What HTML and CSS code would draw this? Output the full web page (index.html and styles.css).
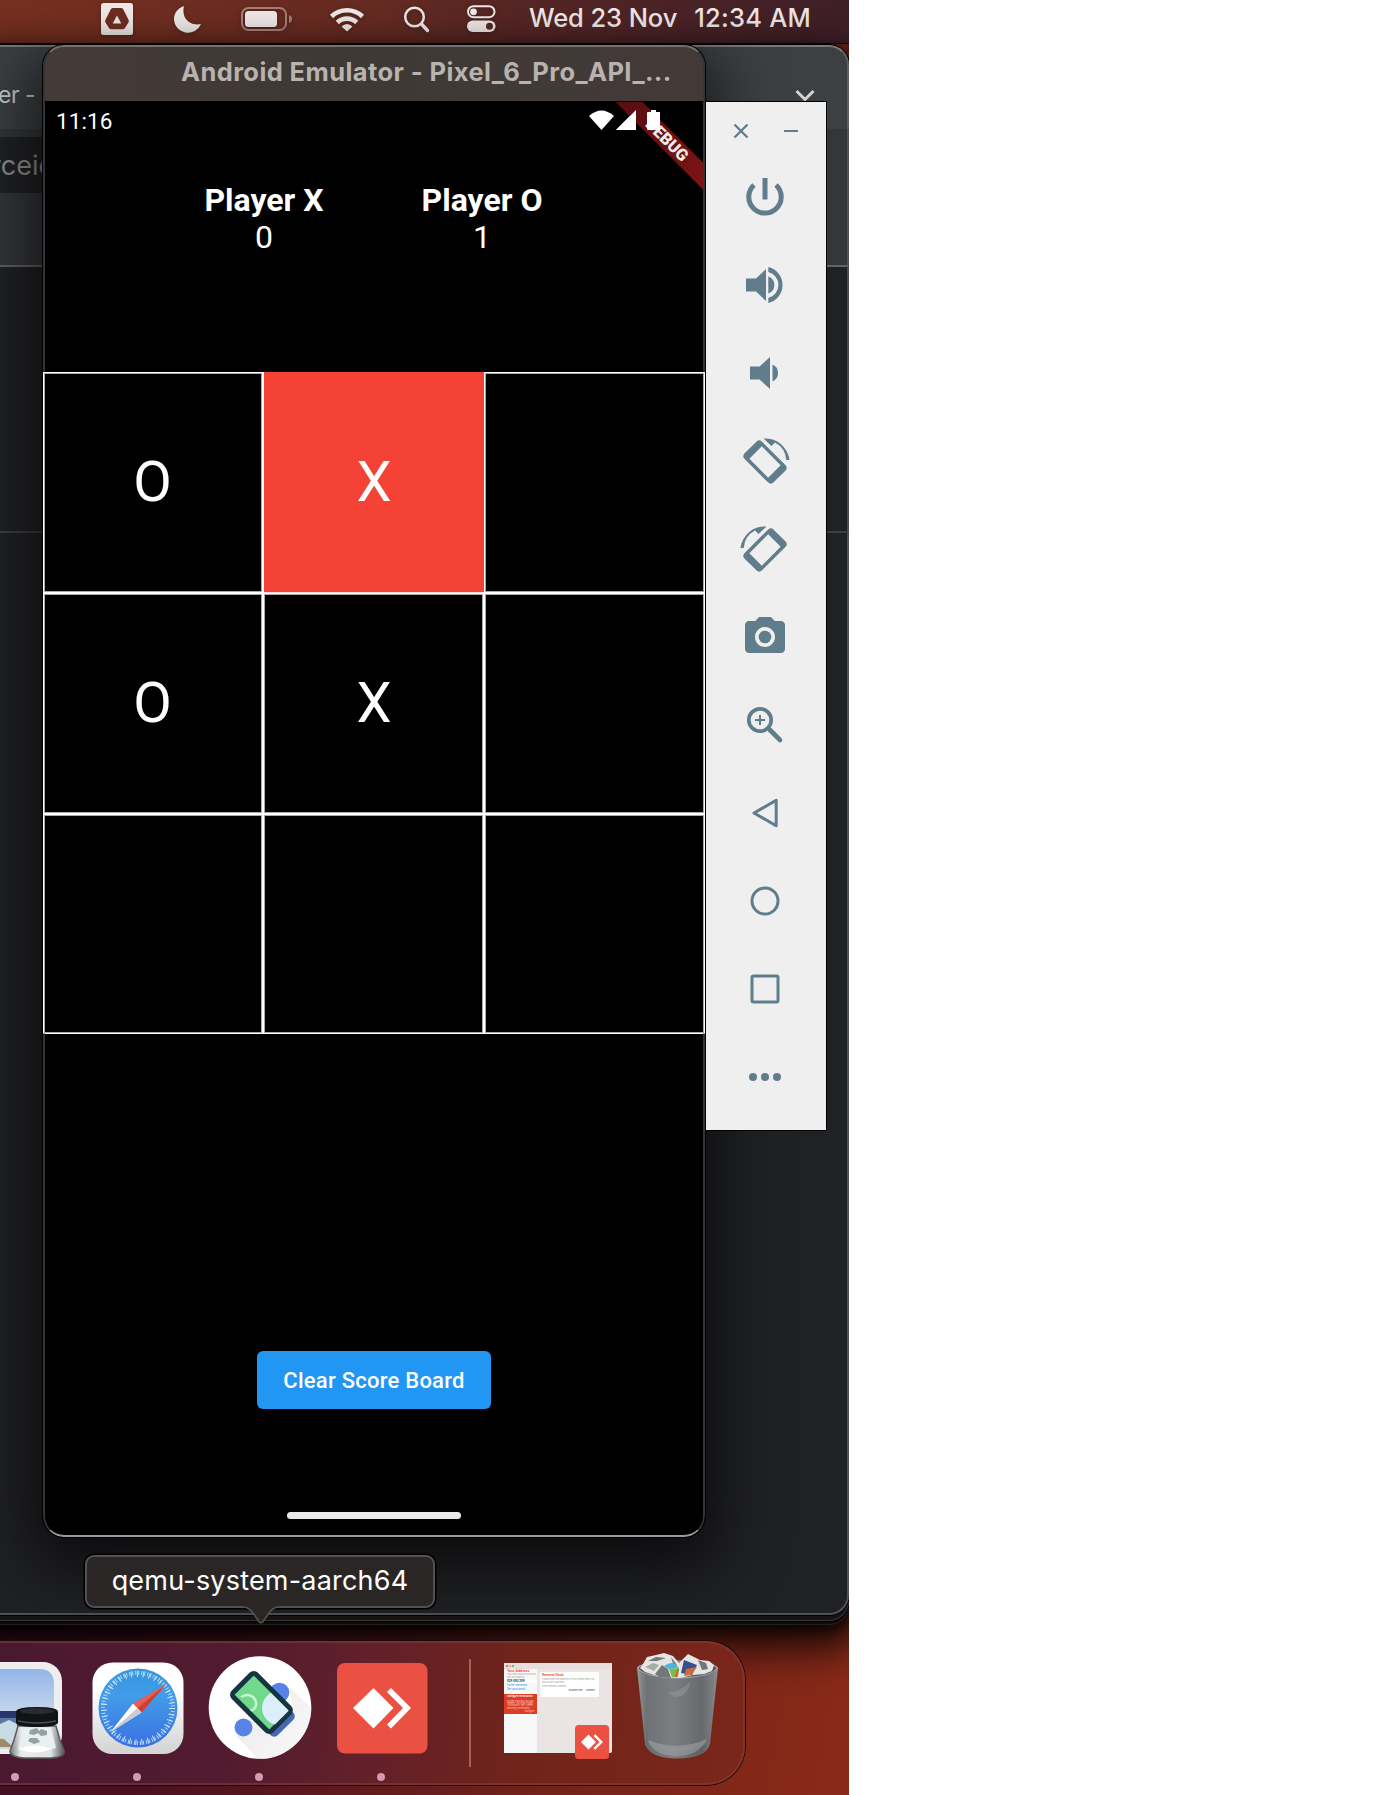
FILE: index.html
```html
<!DOCTYPE html>
<html lang="en">
<head>
<meta charset="utf-8">
<title>Tic Tac Toe in the emulator</title>
<link rel="stylesheet" href="styles.css">
</head>
<body>
<div class="desktop">
  <header class="menubar">
    <svg class="menubar-icons" viewBox="90 0 420 43" width="420" height="43">
      <rect x="101" y="3" width="32" height="32" rx="2.500" fill="#efe8e7"/>
      <path d="M113 8h8q1.500 0 2.200 1.200l5.300 10.500q.8 1.600 0 2.800l-3.500 5.500q-.8 1.200-2.500 1.200h-11q-1.700 0-2.500-1.200l-3.500-5.500q-.8-1.200 0-2.800l5.300-10.500q.7-1.200 2.200-1.200z" fill="#6e2d22"/>
      <path d="M117 15.500l4.300 8h-8.600z" fill="#efe8e7"/>
      <path d="M184 6c-6 2-10 7-10 13a14 14 0 0 0 27 5c-11 2.500-20-6-17-18z" fill="#efe8e7"/>
      <rect x="242" y="8" width="44" height="22" rx="6.500" fill="none" stroke="#a77f7a" stroke-width="2"/>
      <rect x="245" y="11" width="32" height="16" rx="3.500" fill="#efe8e7"/>
      <path d="M289 15q3 1 3 4t-3 4z" fill="#a77f7a"/>
      <g fill="none" stroke="#efe8e7" stroke-width="4.600">
        <path d="M331.500 16.500a22.500 22.500 0 0 1 31 0"/>
        <path d="M337.300 22.500a14 14 0 0 1 19.400 0"/>
      </g>
      <path d="M341.500 26.500q5.500-5 11 0l-5.500 5z" fill="#efe8e7"/>
      <circle cx="414.500" cy="17" r="9.300" fill="none" stroke="#efe8e7" stroke-width="2.500"/>
      <path d="M421.500 24l6 6.500" stroke="#efe8e7" stroke-width="3.400" stroke-linecap="round"/>
      <rect x="468" y="6.200" width="26.500" height="11" rx="5.500" fill="none" stroke="#efe8e7" stroke-width="2"/>
      <circle cx="473.500" cy="11.800" r="3.400" fill="#efe8e7"/>
      <rect x="467" y="20.500" width="28.500" height="11.500" rx="5.700" fill="#efe8e7"/>
      <circle cx="489.500" cy="26.200" r="3.500" fill="#5a2826"/>
    </svg>
    <span class="menubar-date">Wed 23 Nov</span>
    <span class="menubar-time">12:34 AM</span>
  </header>

  <section class="window browser browser-back"></section>
  <section class="window browser browser-middle"></section>
  <section class="window browser">
    <div class="tabstrip">
      <span class="tab-title">er -</span>
      <svg class="chevron" width="20" height="14" viewBox="0 0 20 14"><path d="M1.500 2l8.500 8.500 8.500-8.500" fill="none" stroke="#d3d4d5" stroke-width="3"/></svg>
    </div>
    <div class="addressbar"><span class="omnibox">rceic</span></div>
    <div class="page-header"></div>
  </section>

  <section class="window emulator">
    <div class="titlebar">Android Emulator - Pixel_6_Pro_API_...</div>
    <div class="screen">
      <div class="statusbar">
        <span class="clock">11:16</span>
        <svg class="status-icons" width="74" height="22" viewBox="588 109 74 22" fill="#fff">
          <path d="M589 116q12.500-11 25 0l-12.500 14z"/>
          <path d="M636 110v20h-20z"/>
          <path d="M651 110h5v2h3q1 0 1 1v16q0 1-1 1h-11q-1 0-1-1v-16q0-1 1-1h3z"/>
        </svg>
      </div>
      <svg class="debug-ribbon" width="92" height="92" viewBox="614 102 92 92">
        <defs><linearGradient id="ribbon" x1="0" y1="0" x2="1" y2="1"><stop offset="0" stop-color="#570e10"/><stop offset="1" stop-color="#7d1417"/></linearGradient></defs>
        <path d="M615.500 102h27l63 63v27z" fill="url(#ribbon)"/>
        <text class="ribbon-text" transform="translate(667 140) rotate(45)" text-anchor="middle" y="5.500">DEBUG</text>
        <path d="M651 110h5v2h3q1 0 1 1v16q0 1-1 1h-11q-1 0-1-1v-16q0-1 1-1h3z M636 110v20h-20z" fill="#fff"/>
      </svg>
      <div class="scores">
        <div class="score"><b>Player X</b><span>0</span></div>
        <div class="score"><b>Player O</b><span>1</span></div>
      </div>
      <div class="board">
        <div class="cell">O</div><div class="cell cell-active">X</div><div class="cell"></div>
        <div class="cell">O</div><div class="cell">X</div><div class="cell"></div>
        <div class="cell"></div><div class="cell"></div><div class="cell"></div>
      </div>
      <button class="clear-button">Clear Score Board</button>
      <div class="home-indicator"></div>
    </div>
  </section>

  <aside class="toolbar">
    <div class="toolbar-window">
      <svg width="18" height="18" viewBox="-9 -9 18 18"><path d="M-6.500-6.500L6.500 6.500M6.500-6.500L-6.500 6.500" stroke="#607d8b" stroke-width="2.300"/></svg>
      <svg width="18" height="18" viewBox="-9 -9 18 18"><path d="M-7 0H7" stroke="#607d8b" stroke-width="2"/></svg>
    </div>
    <svg class="tool" viewBox="-25 -25 50 50"><path d="M-11-12A16.200 16.200 0 1 0 11-12" fill="none" stroke="#607d8b" stroke-width="5"/><path d="M-2.500-19h5V2.500h-5z"/></svg>
    <svg class="tool" viewBox="-25 -25 50 50"><path d="M-19-6.500h10L1-16V16L-9 6.500h-10zM3.300-8.500a9 9 0 0 1 0 17zM3.300-18a18.500 18.500 0 0 1 0 36v-5a13.400 13.400 0 0 0 0-26z"/></svg>
    <svg class="tool" viewBox="-25 -25 50 50"><path d="M-15-6.500h9.500L5-16V16L-5.500 6.500H-15zM7.500-8.500a9.300 9.300 0 0 1 0 17z"/></svg>
    <svg class="tool" viewBox="-25 -25 50 50"><g id="rotate"><path transform="translate(0 1) rotate(45)" fill-rule="evenodd" d="M-16.500-12.300h33q4 0 4 4v16.600q0 4-4 4h-33q-4 0-4-4v-16.600q0-4 4-4zM-13.300-8.800v17.600h26.600v-17.600z"/><path d="M-1.500-22.500A24.500 24.500 0 0 1 24.500-1h-3.200A21.500 21.500 0 0 0 10-18.500L6.500-15z"/></g></svg>
    <svg class="tool" viewBox="-25 -25 50 50"><use href="#rotate" transform="scale(-1 1)"/></svg>
    <svg class="tool" viewBox="-25 -25 50 50"><path transform="translate(-24 -24) scale(2)" d="M9 2L7.170 4H4c-1.100 0-2 .9-2 2v12c0 1.100.9 2 2 2h16c1.100 0 2-.9 2-2V6c0-1.100-.9-2-2-2h-3.170L15 2H9zm3 15c-2.760 0-5-2.240-5-5s2.240-5 5-5 5 2.240 5 5-2.240 5-5 5z"/><circle r="6.300"/></svg>
    <svg class="tool" viewBox="-25 -25 50 50"><g fill="none" stroke="#607d8b"><circle cx="-5" cy="-5" r="11.200" stroke-width="3.700"/><path d="M-10-5H0M-5-10V0" stroke-width="2"/><path d="M4.500 4.500L15 15" stroke-width="4.600" stroke-linecap="round"/></g></svg>
    <svg class="tool" viewBox="-25 -25 50 50"><path d="M11.200-12.700V12.700L-11 0Z" fill="none" stroke="#607d8b" stroke-width="3" stroke-linejoin="round"/></svg>
    <svg class="tool" viewBox="-25 -25 50 50"><circle r="13" fill="none" stroke="#607d8b" stroke-width="3"/></svg>
    <svg class="tool" viewBox="-25 -25 50 50"><rect x="-13" y="-13" width="26" height="26" rx="1.500" fill="none" stroke="#607d8b" stroke-width="3"/></svg>
    <svg class="tool" viewBox="-25 -25 50 50"><circle cx="-12" r="4"/><circle r="4"/><circle cx="12" r="4"/></svg>
  </aside>

  <nav class="dock">
    <svg class="dock-item" viewBox="-46 1641 122 143" width="122" height="143">
      <defs>
        <linearGradient id="sky" x1="0" y1="0" x2="0" y2="1"><stop offset="0" stop-color="#94b5ea"/><stop offset="1" stop-color="#c3d5ec"/></linearGradient>
        <linearGradient id="glass" x1="0" y1="0" x2="1" y2="0"><stop offset="0" stop-color="#777b7c"/><stop offset=".2" stop-color="#e8ebea"/><stop offset=".75" stop-color="#dfe5e5"/><stop offset="1" stop-color="#555"/></linearGradient>
      </defs>
      <rect x="-29" y="1662" width="91" height="92" rx="19" fill="#eeeeef"/>
      <path d="M-22 1669h61q15 0 15 15v28h-76z" fill="url(#sky)"/>
      <path d="M-22 1711h76v36h-76z" fill="#29356b"/>
      <path d="M-22 1718h44v6h-44z" fill="#5876a0"/>
      <path d="M-22 1724l12-3 10 3 9-4 8 4v25h-39z" fill="#c9dce3"/>
      <path d="M-22 1738l26 1 9 8h-35z" fill="#a08a69"/>
      <path d="M18 1726h38l4 14 4 11q1 6-13 7H24q-14-1-14-7l4-11z" fill="url(#glass)" stroke="#5b5e5e" stroke-width="1.500"/>
      <path d="M24 1728h27l5 20q-19 6-38 0z" fill="#e9f0ef"/>
      <path d="M30 1730l7-2 3 4-6 3-5-1zM41 1729l6 2v4l-6 1-3-3zM30 1738l7 0 3 4-6 2-6-3z" fill="#96a1a3"/>
      <path d="M18 1749q17-7 34 0-17 7-34 0" fill="#fff"/>
      <path d="M16 1712q0-5 21-5t21 5v11q-3 4-21 4t-21-4z" fill="#111314"/><ellipse cx="37" cy="1711" rx="17" ry="3" fill="#292c2e"/>
      <path d="M18 1721q19 4 38 0" stroke="#4b4e50" fill="none" stroke-width="1.500"/>
      <circle class="running" cx="15" cy="1777" r="4"/>
    </svg>
    <svg class="dock-item" viewBox="76 1641 122 143" width="122" height="143">
      <defs>
        <linearGradient id="safari-tile" x1="0" y1="0" x2="0" y2="1"><stop offset=".3" stop-color="#fff"/><stop offset="1" stop-color="#d3d3d4"/></linearGradient>
        <linearGradient id="safari-dial" x1="0" y1="0" x2="0" y2="1"><stop offset="0" stop-color="#3596dc"/><stop offset=".35" stop-color="#429ce9"/><stop offset="1" stop-color="#3a70e0"/></linearGradient>
      </defs>
      <rect x="92.500" y="1662.500" width="91" height="91.500" rx="20" fill="url(#safari-tile)"/>
      <circle cx="138" cy="1708" r="39.500" fill="url(#safari-dial)"/>
      <circle cx="138" cy="1708" r="35" fill="none" stroke="#b7daf7" stroke-width="4" stroke-dasharray="1 2.054"/>
      <circle cx="138" cy="1708" r="34" fill="none" stroke="#c9e3f9" stroke-width="6" stroke-dasharray="1 5.109"/>
      <path d="M166 1684.500l-24.500 28-8.500-9z" fill="#eb5d50"/><path d="M166 1684.500l-24.500 28-4-4.500z" fill="#c94238"/>
      <path d="M110.500 1732l22.500-28.500 8.500 9z" fill="#fff"/><path d="M110.500 1732l27-24 4 4.500z" fill="#c8ccd0"/>
      <circle class="running" cx="137" cy="1777" r="4"/>
    </svg>
    <svg class="dock-item" viewBox="198 1641 122 143" width="122" height="143">
      <defs>
        <clipPath id="disc"><circle cx="260" cy="1707.500" r="51.300"/></clipPath>
        <clipPath id="phone"><rect x="-25" y="-13.500" width="50" height="27" transform="translate(261.500 1702.500) rotate(45)"/></clipPath>
        <linearGradient id="cast" x1="0" y1="0" x2="1" y2="1"><stop offset="0" stop-color="#d6d6d8"/><stop offset="1" stop-color="#fff"/></linearGradient>
      </defs>
      <circle cx="260" cy="1707.500" r="51.300" fill="#fff"/>
      <g clip-path="url(#disc)"><path d="M289 1687l40 38v60h-46l-46-48 12-18 25 12 20-20z" fill="url(#cast)" opacity=".55"/></g>
      <circle cx="279.500" cy="1692.500" r="9.800" fill="#5583e6"/>
      <circle cx="243.500" cy="1727.500" r="9" fill="#5583e6"/>
      <rect x="-29" y="-16" width="58" height="32" rx="5" transform="translate(265 1707) rotate(45)" fill="#4467b8"/>
      <rect x="-27" y="-16" width="54" height="32" rx="3.500" transform="translate(261.500 1702.500) rotate(45)" fill="#71d98b" stroke="#173443" stroke-width="5"/>
      <g clip-path="url(#phone)"><circle cx="279" cy="1708" r="17" fill="#dcedfc"/><path d="M241 1697q7-4 12 0 6 6 1 12l-6 3" fill="none" stroke="#c9f4d1" stroke-width="2.500"/></g>
      <circle class="running" cx="259" cy="1777" r="4"/>
    </svg>
    <svg class="dock-item" viewBox="320 1641 122 143" width="122" height="143">
      <rect x="337" y="1663" width="90.500" height="90.500" rx="8" fill="#ea5142"/>
      <path d="M373.500 1688l20 20-20 20.500-20.500-20.500zM387 1692l4-4 20 20-20 20.500-4-4 16-16.500z" fill="#fff"/>
      <circle class="running" cx="381" cy="1777" r="4"/>
    </svg>
    <span class="dock-divider"></span>
    <div class="mini">
      <div class="mini-bar"><i></i><i></i><i></i></div>
      <div class="mini-body">
        <div class="mini-side">
          <b>Your Address</b><span>Your desk can be accessed with this address.</span><strong>828 493 289</strong>
          <em>Invite someone...</em><em>Set password...</em>
          <div class="mini-alert"><b>Configure Permissions</b><span>In order to access your Mac remotely, you need to grant "Accessibility" and "Screen Recording" permissions.</span><u>Configure</u></div>
        </div>
        <div class="mini-card"><b>Remote Desk</b><span>Please enter the address of the remote desk you would like to access.</span><span class="mini-input">Enter Remote Address</span><u>Browse Files &nbsp; &nbsp; Connect</u></div>
      </div>
      <svg class="mini-badge" viewBox="0 0 34 34" width="34" height="34"><rect width="34" height="34" rx="3.500" fill="#ea5142"/><path d="M13.500 9.500l7.500 7.500-7.500 7.500L6 17zM18.500 11l1.700-1.700L28 17l-7.800 7.700-1.700-1.700 6-6z" fill="#fff"/></svg>
    </div>
    <svg class="trash" viewBox="634 1641 88 143" width="88" height="143">
      <defs>
        <linearGradient id="bin" x1="0" y1="0" x2="1" y2="0"><stop offset="0" stop-color="#9a9d9e"/><stop offset=".12" stop-color="#696d6f"/><stop offset=".45" stop-color="#7b7f81"/><stop offset=".8" stop-color="#5c6062"/><stop offset="1" stop-color="#8b8f91"/></linearGradient>
      </defs>
      <path d="M637 1668q3-6 40-7 37 1 41 7l-8 76q-3 14-33 14.500-28-.5-32-14.500z" fill="url(#bin)"/>
      <path d="M637.500 1668q6-7 40-7 34 0 40 7-6 9-40 10-34-1-40-10z" fill="#54585b" stroke="#a9acad" stroke-width="1.200"/>
      <path d="M643 1664l4-7 9-2 8-2 9 3 6 7 9-9 12 6 9 1 5 4-2 6-8 3-11 1-13 3-20-1-15-5-5-4z" fill="#e5e5e3"/>
      <path d="M648 1661l8-4 10 1-9 3zM655 1674l7-9 6 4 3 9-12-1zM698 1660l8 3 2 6-6 1zM671 1657l6 8-3 2z" fill="#73777a"/>
      <path d="M645 1667l8-4 6 2-5 6z" fill="#a9abab"/>
      <path d="M664 1666q7-5 11-2l4 4-10 1z" fill="#4eb3d9"/><path d="M669 1669l10-1-1 9-6 0z" fill="#78bd55"/><path d="M677 1669l2 0-2 8-2 0z" fill="#d85e35"/>
      <path d="M684 1660l13 5-5 10-11-2z" fill="#394e91"/><path d="M686 1669l11-2-6 8-7 1z" fill="#cf6a38"/>
      <path d="M640 1671q18 9 37 8 22 0 38-9l-8 73q-10 8-30 8-23 0-29-8z" fill="#7b7f80" opacity=".35"/>
      <path d="M668 1693q12-1 22-11-2 14-14 15z" fill="#a7aaab" opacity=".35"/><path d="M648 1740q30 12 59-1-8 17-30 17-24 0-29-16z" fill="#a7aaab" opacity=".5"/>
    </svg>
  </nav>

  <div class="dock-tip">qemu-system-aarch64
    <svg class="tip-arrow" width="36" height="20" viewBox="0 0 36 20"><path d="M0 0h36v2q-6 0-10 6l-6 8.500q-2 2.500-4 0L10 8Q6 2 0 2z" fill="#2a2626"/><path d="M0 2q6 0 10 6l6 8.500q2 2.500 4 0L26 8q4-6 10-6" fill="none" stroke="#555051" stroke-width="1.700"/></svg>
  </div>
</div>
</body>
</html>
```
FILE: styles.css
```css
* { box-sizing: border-box; }
body { margin: 0; background: #fff; font-family: Inter, "Noto Sans", sans-serif; }
svg { display: block; flex: none; }

.desktop {
  position: relative; width: 849px; height: 1795px; overflow: hidden;
  background:
    linear-gradient(100deg, #2f0a2b 0, #4b1120 40%, #74231a 75%, #8a2a18 100%);
}

.menubar {
  display: flex; align-items: center; height: 44px; padding: 0 0 0 90px;
  background: linear-gradient(90deg, #76301f 0, #652a22 45%, #552624 60%, #3f1f28 100%);
  color: #efe8e7; font-size: 25.500px; font-weight: 500; white-space: pre;
  border-bottom: 1px solid #0c0808;
}
.menubar-icons { filter: drop-shadow(0 1px 2px #0004); }
.menubar-date { padding: 0 0 9px 19px; letter-spacing: -.1px; }
.menubar-time { padding: 0 0 9px 17px; letter-spacing: .25px; }

.window { position: absolute; }
.browser {
  left: -40px; top: 45px; width: 889px; height: 1570px; overflow: hidden;
  background: #202124; border-radius: 20px;
  box-shadow: inset 0 0 0 2px #505154, 0 0 0 1px #000;
}
.browser-middle { top: 51px; background: #151313; box-shadow: inset 0 0 0 1px #383230, 0 0 0 1px #000; }
.browser-back { top: 55px; background: #0b0b0b; overflow: visible; box-shadow: inset 0 0 0 1px #22201f, 0 10px 40px 14px #000c, 0 2px 18px #000; }
.tabstrip {
  display: flex; justify-content: space-between; align-items: center;
  height: 84px; padding: 14px 32px 0 38px; background: #3c4043;
  border-top: 2px solid #77797a; border-right: 2px solid #5b5e60; border-top-right-radius: 20px;
}
.tab-title { color: #c9cbcc; font-size: 23px; letter-spacing: -.5px; }
.chevron { margin-top: 2px; }
.addressbar { height: 138px; padding: 8px 0 0 40px; background: #35363a; border-bottom: 2px solid #626366; border-right: 2px solid #515255; }
.omnibox { display: flex; align-items: center; width: 200px; height: 56px; background: #202124; color: #8f9193; font-size: 27px; text-indent: -9px; }
.page-header { height: 266px; border-bottom: 2px solid #3d3e41; border-right: 2px solid #4b4c4f; }

.emulator {
  left: 43px; top: 45px; width: 662px; height: 1492px; padding: 0;
  display: flex; flex-direction: column; overflow: hidden;
  background: #000; border-radius: 21px;
}
.emulator::after {
  content: ""; position: absolute; inset: 0; border-radius: 21px; pointer-events: none;
  border: 2px solid #343434; border-top-color: #77716d; border-bottom-color: #999c9b;
  mask: linear-gradient(#000 0 326px, transparent 327px 988px, #000 989px);
}
.browser::after {
  content: ""; position: absolute; left: 83px; top: 0; width: 662px; height: 1492px;
  border-radius: 21px; box-shadow: 0 0 0 1px #000, 0 20px 65px 12px #000a;
}
.browser-middle::after, .browser-back::after { content: none; }
.titlebar {
  flex: none; height: 56px; padding: 9px 0 0 138px;
  background: linear-gradient(90deg, #443a38 0, #3e3935 45%, #433a38 100%);
  color: #b9b3ae; font-size: 25.500px; font-weight: 700; line-height: 36px; white-space: nowrap; letter-spacing: .4px;
}
.screen {
  position: relative; flex: 1; display: flex; flex-direction: column; align-items: center;
  color: #fff; font-family: Roboto, sans-serif;
}
.statusbar {
  display: flex; align-self: stretch; justify-content: space-between; align-items: flex-start;
  padding: 8px 43px 0 13px; height: 71px;
}
.clock { font-size: 22.500px; line-height: 24px; letter-spacing: .1px; }
.debug-ribbon { position: absolute; left: 571px; top: 1px; }
.ribbon-text { font: 900 16.500px Roboto, sans-serif; fill: #f3e9e9; }
.scores { display: flex; width: 436px; height: 200px; margin-left: -2px; }
.score { flex: 1; display: flex; flex-direction: column; align-items: center; padding-top: 10px; font-size: 32px; line-height: 37px; }
.board { flex: none; display: grid; grid-template-columns: 220px 221px 221px; grid-template-rows: 221px 221px 220px; width: 662px; }
.cell {
  display: flex; align-items: center; justify-content: center; padding: 0 1px 2px 0;
  font-size: 56px; box-shadow: inset 0 0 0 1px #fff, inset 0 0 0 2px #aaa;
}
.cell:nth-child(3n + 2) { padding: 0 0 2px 1px; }
.cell-active { background: #f44336; box-shadow: inset 1px 0 #fff, inset 0 -1px #ffd8d4; }
.clear-button {
  flex: none; width: 234px; height: 58px; margin-top: 317px; padding: 0;
  border: 0; border-radius: 6px; background: #2196f3; color: #fff;
  font: 500 22px Roboto, sans-serif; letter-spacing: .25px;
}
.home-indicator { width: 174px; height: 7px; margin-top: 103px; border-radius: 4px; background: #eae8e9; }

.toolbar {
  position: absolute; left: 706px; top: 101px; width: 121px; height: 1030px;
  display: flex; flex-direction: column; align-items: center; gap: 38px; padding-right: 2px;
  background: #efefef; border: 1px solid #000; border-left: 0;
}
.toolbar-window { display: flex; gap: 32px; height: 32px; padding: 20px 0 0 2px; }
.tool { width: 50px; height: 50px; fill: #607d8b; }

.dock {
  position: absolute; left: -46px; top: 1641px; width: 791px; height: 144px;
  display: flex; align-items: center; overflow: hidden; border-radius: 39px; padding-bottom: 1px;
  background: linear-gradient(96deg, #481831 0, #521b2f 35%, #62202a 52%, #702419 72%, #7b2619 100%);
  box-shadow: inset 0 0 0 2px #83424280, 0 0 0 1px #1b0b0b;
}
.running { fill: #d59ab0; }
.dock-divider { width: 2px; height: 108px; margin: 0 33px 0 27px; background: #a8605b; }
.mini { position: relative; flex: none; width: 108px; height: 90px; margin-bottom: 9px; background: #ebe4e5; border-radius: 2px; font-size: 2.800px; line-height: 3px; }
.mini-bar { display: flex; gap: 1px; height: 6px; padding: 2px; background: #e8dede; }
.mini-bar i { width: 2px; height: 2px; border-radius: 1px; background: #df4d40; }
.mini-bar i:nth-child(2) { background: #e5ac37; }
.mini-bar i:nth-child(3) { background: #54b648; }
.mini-body { display: flex; gap: 3px; height: 84px; }
.mini-side { flex: none; width: 33px; padding: 1px 0 0 3px; background: #f8f8f8; display: flex; flex-direction: column; gap: 1px; color: #999; }
.mini-side > span { font-size: 2.200px; line-height: 2.600px; }
.mini-side b, .mini-card b { font-size: 3.400px; color: #ef5b3c; }
.mini-side strong { color: #222; background: #fff; }
.mini-side em { color: #2e91d8; font-style: normal; }
.mini-side .mini-alert { flex: none; margin: 2px 0 0 -3px; height: 20px; padding: 2px 3px; background: #dc3d24; color: #ffd5cc; font-size: 2px; line-height: 2.400px; display: flex; flex-direction: column; gap: 1px; }
.mini-side .mini-alert b { color: #fff; font-size: 2.300px; white-space: nowrap; }
.mini-alert u { text-align: right; text-decoration: none; }
.mini-card { flex: none; width: 59px; height: 25px; margin-top: 3px; padding: 2px; background: #fff; border-radius: 1px; color: #999; font-size: 2.300px; display: flex; flex-direction: column; gap: 1px; }
.mini-card u { padding-right: 2px; text-align: right; text-decoration: none; color: #333; }
.mini-badge { position: absolute; left: 71px; top: 62px; }
.trash { margin-left: 22px; }

.dock-tip {
  position: absolute; left: 85px; top: 1555px; width: 350px; height: 53px;
  display: flex; align-items: center; justify-content: center; padding-bottom: 2px;
  background: #2a2626; border: 2px solid #555051; border-radius: 9px;
  box-shadow: 0 0 0 1.500px #000; color: #fff; font-size: 27px; letter-spacing: .2px;
}
.tip-arrow { position: absolute; left: 156px; top: 48px; }
```
